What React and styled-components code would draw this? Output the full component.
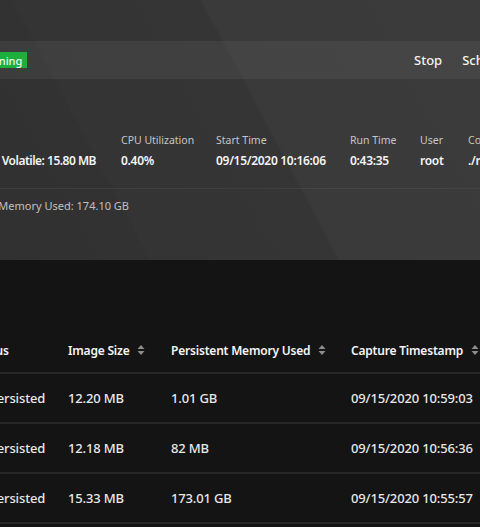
import { Fragment } from "react";
import styled, { createGlobalStyle } from "styled-components";

const GlobalStyle = createGlobalStyle`
  html, body {
    margin: 0;
    padding: 0;
    background: #141414;
    overflow: hidden;
  }
  body {
    font-family: "Noto Sans", "Open Sans", sans-serif;
    color: #f4f4f4;
  }
`;

const Page = styled.div`
  width: 1100px;
  margin-left: -160px;
`;

const Banner = styled.section`
  height: 260px;
  padding-top: 41px;
  box-sizing: border-box;
  background: linear-gradient(
    62deg,
    #303030 0%,
    #323232 25%,
    #343434 25.2%,
    #353535 40.2%,
    #3a3a3a 40.4%,
    #3d3d3d 100%
  );
`;

const Toolbar = styled.div`
  height: 38px;
  display: grid;
  grid-template-columns: 564px auto auto auto 1fr;
  align-items: center;
  background: rgba(255, 255, 255, 0.055);
`;

const TitleGroup = styled.div`
  display: flex;
  align-items: center;
  gap: 10px;
  padding-left: 16px;
  overflow: hidden;
  white-space: nowrap;
`;

const Name = styled.span`
  font-size: 13px;
  width: 107px;
  color: transparent;
`;

const Badge = styled.span`
  display: inline-flex;
  align-items: center;
  height: 16px;
  padding: 0 5px;
  background: #1eae3e;
  color: #eafbe9;
  font-size: 11px;
  font-weight: 500;
`;

const Action = styled.button`
  height: 38px;
  padding: 0 10px;
  border: none;
  background: transparent;
  color: #f4f4f4;
  font-family: inherit;
  font-size: 13px;
  font-weight: 500;
  cursor: pointer;
`;

const Metrics = styled.div`
  display: grid;
  grid-template-columns: 281px 95px 134px 70px 48px 1fr;
  margin-top: 53px;
  padding-bottom: 18px;
  border-bottom: 1px solid rgba(255, 255, 255, 0.06);
`;

const Metric = styled.div`
  display: flex;
  flex-direction: column;
  align-items: flex-start;
  gap: 4px;
  white-space: nowrap;
  padding-right: ${(p) => (p.$wide ? "25px" : "0")};
`;

const Label = styled.span`
  font-size: 10.5px;
  line-height: 16px;
  color: #c6c6c6;
`;

const Value = styled.span`
  align-self: ${(p) => (p.$end ? "flex-end" : "flex-start")};
  font-size: 12px;
  line-height: 18px;
  font-weight: 600;
  letter-spacing: ${(p) => (p.$end ? "-0.5px" : "-0.3px")};
  color: #f4f4f4;
`;

const Summary = styled.div`
  width: 289px;
  display: flex;
  justify-content: flex-end;
  padding-top: 9px;
  font-size: 11px;
  line-height: 16px;
  color: #c0c0c0;
  white-space: nowrap;
`;

const Content = styled.section`
  padding-top: 68px;
`;

const Table = styled.div`
  display: grid;
  grid-template-columns: 95px 103px 180px 1fr;
  padding-left: 133px;
`;

const HeadCell = styled.div`
  height: 44px;
  display: flex;
  align-items: center;
  gap: 8px;
  border-bottom: 2px solid #262626;
  font-size: 12px;
  font-weight: 600;
  letter-spacing: -0.2px;
  color: #f4f4f4;
  white-space: nowrap;
`;

const Cell = styled.div`
  height: 48px;
  display: flex;
  align-items: center;
  gap: 8px;
  border-bottom: 2px solid #262626;
  font-size: 13px;
  font-weight: 500;
  letter-spacing: -0.15px;
  color: #e8e8e8;
  white-space: nowrap;
`;

const Dot = styled.span`
  width: 8px;
  height: 8px;
  border-radius: 50%;
  background: #8d8d8d;
`;

const SortIcon = () => (
  <svg width="8" height="12" viewBox="0 0 8 12" fill="#8d8d8d">
    <polygon points="4,1 7.5,5 0.5,5" />
    <polygon points="4,11 7.5,7 0.5,7" />
  </svg>
);

const snapshots = [
  { size: "12.20 MB", mem: "1.01 GB", time: "09/15/2020 10:59:03" },
  { size: "12.18 MB", mem: "82 MB", time: "09/15/2020 10:56:36" },
  { size: "15.33 MB", mem: "173.01 GB", time: "09/15/2020 10:55:57" },
];

export default function App() {
  return (
    <Page>
      <GlobalStyle />
      <Banner>
        <Toolbar>
          <TitleGroup>
            <Name>notebook-01</Name>
            <Badge>Running</Badge>
          </TitleGroup>
          <Action>Stop</Action>
          <Action>Schedule</Action>
          <Action>Delete</Action>
        </Toolbar>
        <Metrics>
          <Metric $wide>
            <Label>Memory</Label>
            <Value $end>Persistent: 158.30 MB | Volatile: 15.80 MB</Value>
          </Metric>
          <Metric>
            <Label>CPU Utilization</Label>
            <Value>0.40%</Value>
          </Metric>
          <Metric>
            <Label>Start Time</Label>
            <Value>09/15/2020 10:16:06</Value>
          </Metric>
          <Metric>
            <Label>Run Time</Label>
            <Value>0:43:35</Value>
          </Metric>
          <Metric>
            <Label>User</Label>
            <Value>root</Value>
          </Metric>
          <Metric>
            <Label>Command</Label>
            <Value>./run.sh</Value>
          </Metric>
        </Metrics>
        <Summary>
          <span>Snapshots: 3 | Total Persistent Memory Used: 174.10 GB</span>
        </Summary>
      </Banner>
      <Content>
        <Table>
          <HeadCell>Status</HeadCell>
          <HeadCell>Image Size <SortIcon /></HeadCell>
          <HeadCell>Persistent Memory Used <SortIcon /></HeadCell>
          <HeadCell>Capture Timestamp <SortIcon /></HeadCell>
          {snapshots.map((s) => (
            <Fragment key={s.time}>
              <Cell><Dot />Persisted</Cell>
              <Cell>{s.size}</Cell>
              <Cell>{s.mem}</Cell>
              <Cell>{s.time}</Cell>
            </Fragment>
          ))}
        </Table>
      </Content>
    </Page>
  );
}
